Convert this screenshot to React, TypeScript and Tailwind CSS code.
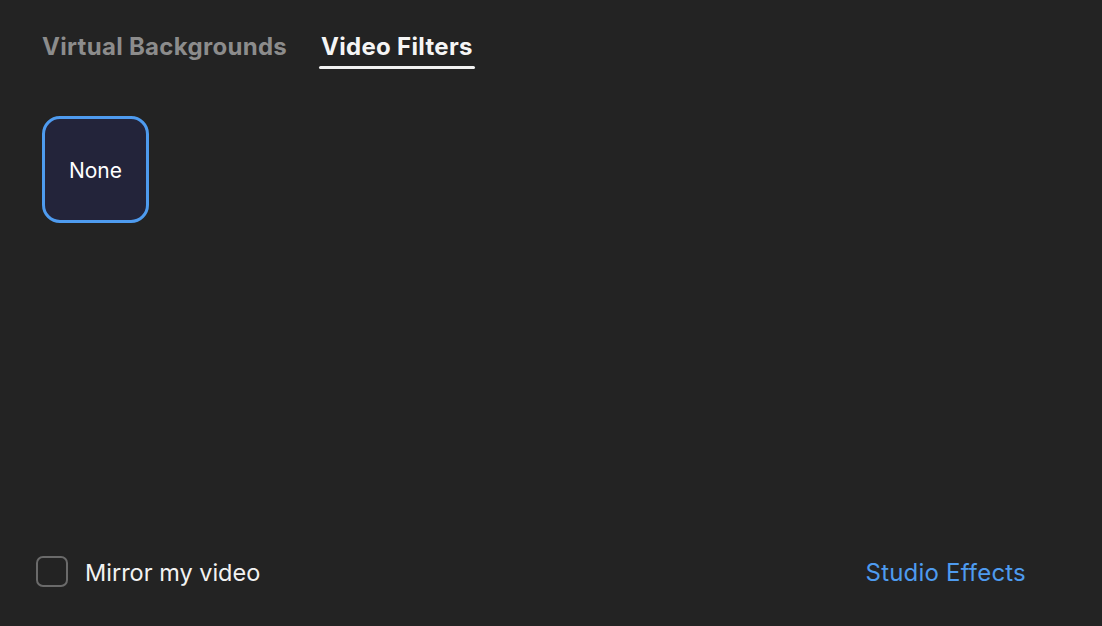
export default function App() {
  return (
    <div
      className="w-[1102px] h-[626px] bg-[#232323] flex flex-col"
      style={{ fontFamily: 'Inter, "Noto Sans", sans-serif' }}
    >
      {/* Tabs */}
      <div className="flex items-start gap-[30px] pl-[40px] pt-[31px]">
        <button className="flex flex-col items-center">
          <span className="text-[24px] leading-[32px] font-bold tracking-[0.3px] text-[#8c8c8c] px-[2px]">
            Virtual Backgrounds
          </span>
        </button>
        <button className="flex flex-col items-center">
          <span className="text-[24px] leading-[32px] font-bold tracking-[0.3px] text-[#f5f5f5] px-[2px]">
            Video Filters
          </span>
          <span className="mt-[3px] h-[3px] w-full rounded-full bg-[#f2f2f2]" />
        </button>
      </div>

      {/* Filters grid */}
      <div className="flex pl-[42px] pt-[47px]">
        <div className="w-[107px] h-[107px] rounded-[18px] border-[3px] border-[#4e9bef] bg-[#23243a] flex items-center justify-center">
          <span className="text-[21px] text-white pt-[2px]">None</span>
        </div>
      </div>

      <div className="flex-1" />

      {/* Footer */}
      <div className="flex items-center justify-between pl-[36px] pr-[76px] pb-[35px]">
        <label className="flex items-center gap-[17px]">
          <span className="w-[32px] h-[31px] rounded-[7px] border-2 border-[#6a6a6a]" />
          <span className="text-[23.5px] text-[#f2f2f2] pt-[2px]">Mirror my video</span>
        </label>
        <button className="text-[24px] tracking-[0.2px] text-[#4e9bef] pt-[3px]">Studio Effects</button>
      </div>
    </div>
  );
}
